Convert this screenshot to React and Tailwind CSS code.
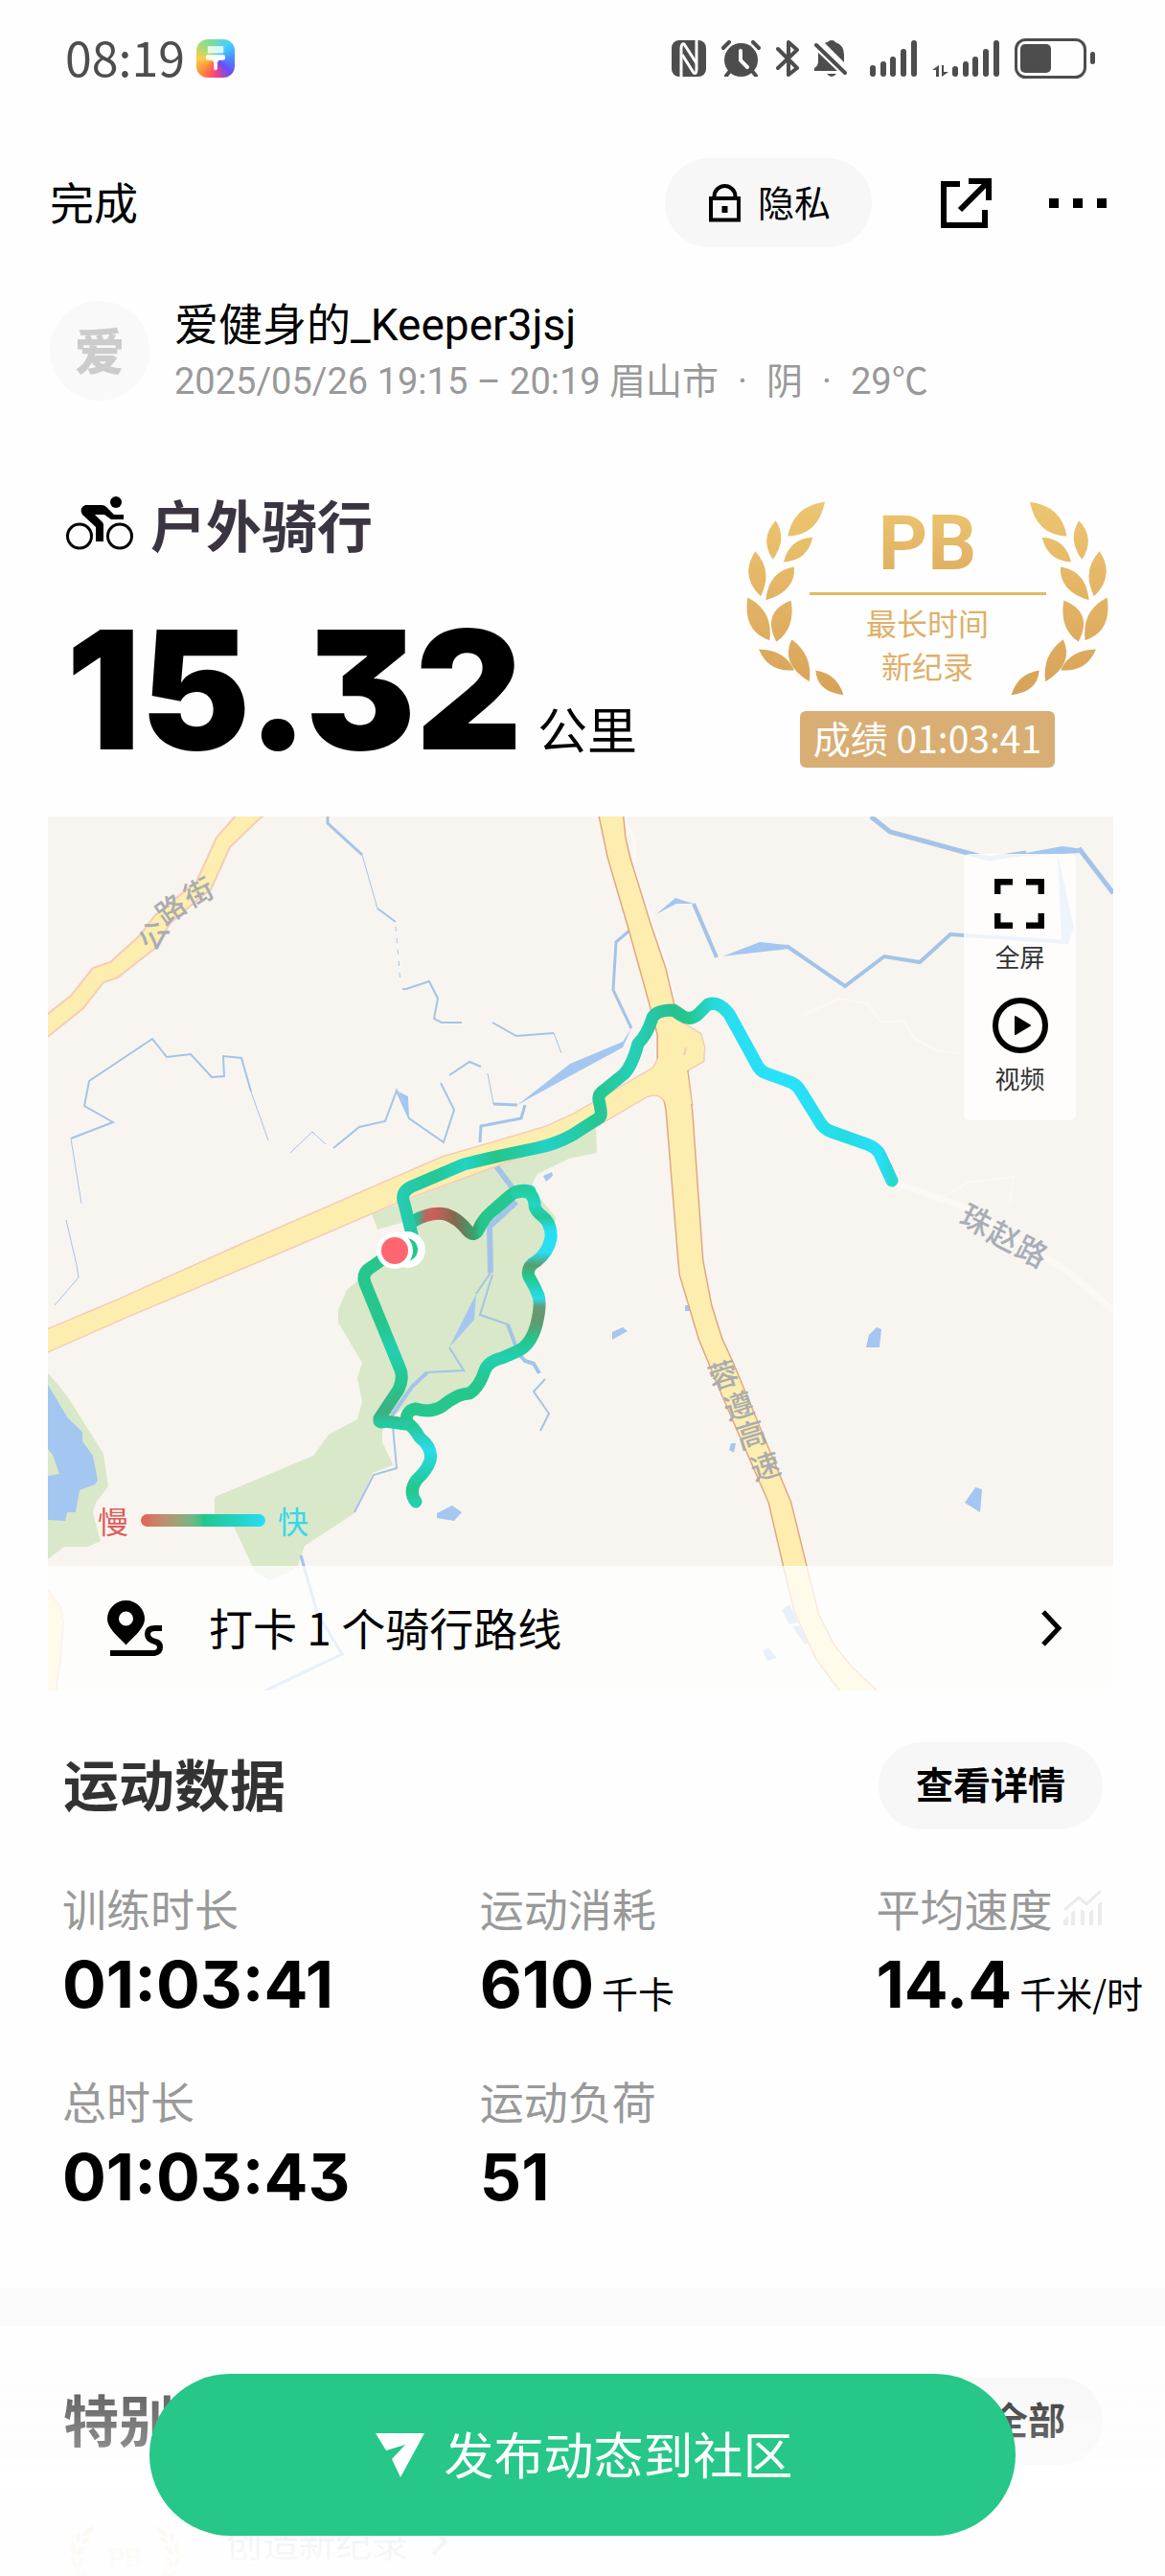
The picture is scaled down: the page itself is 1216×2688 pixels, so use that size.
import React from "react";

const INK = "#4d4d4d";

function ThemeIcon() {
  return (
    <span className="flex size-10 items-center justify-center rounded-xl bg-[conic-gradient(from_0deg,#6fd9b0,#3fd0ff,#4a8cff,#6a4cf5,#ff3f7a,#ff8a3a,#f7d04a,#9fdc7a,#6fd9b0)]">
      <svg viewBox="0 0 24 30" className="h-7 w-[22px]" fill="#fff" aria-hidden="true">
        <path d="M3 1h18v8H3z" fillOpacity=".8" />
        <path d="M1 13q0-2 2-2h18q2 0 2 2v2q0 2-3 2h-4q-1 1-2 3v7q-2 3-4 0v-7q-1-2-2-3H4q-3 0-3-2z" />
      </svg>
    </span>
  );
}

function StatusIcons() {
  return (
    <div className="flex items-center">
      <svg viewBox="0 0 36 38" className="w-9" aria-hidden="true">
        <rect width="36" height="38" rx="8" fill={INK} />
        <path d="M10 38V9q0-6 3-5l13 20" fill="none" stroke="#fff" strokeWidth="3" />
        <path d="M26 0v30q0 6-3 4L11 15" fill="none" stroke="#fff" strokeWidth="3" />
      </svg>
      <svg viewBox="0 0 41 38" className="ml-4 w-[41px]" aria-hidden="true">
        <circle cx="20.500" cy="20.500" r="17.500" fill={INK} />
        <path d="M2 8l6-6M39 8l-6-6M9 32l-4 5M32 32l4 5" stroke={INK} strokeWidth="4" strokeLinecap="round" />
        <path d="M20 11v10l7 7" fill="none" stroke="#fff" strokeWidth="4" strokeLinecap="round" />
      </svg>
      <svg viewBox="0 0 24 38" className="ml-4 w-6" aria-hidden="true">
        <path d="M2 9l20 20-9 7V2l9 8L2 29" fill="none" stroke={INK} strokeWidth="4" strokeLinecap="round" strokeLinejoin="round" />
      </svg>
      <svg viewBox="0 0 34 38" className="ml-4 w-[34px]" aria-hidden="true">
        <path d="M0 32v-3q4-2 4-7v-9l20 19zM11 3q1-1 3-1 1-2 4-2t4 2q9 3 9 13v8z" fill={INK} />
        <path d="M2 5l30 29" stroke={INK} strokeWidth="4" strokeLinecap="round" />
        <path d="M13 35h10q-5 6-10 0z" fill={INK} />
      </svg>
      <svg viewBox="0 0 49 38" className="ml-6 w-[49px]" fill={INK} aria-hidden="true">
        <rect x="0" y="26" width="6" height="12" rx="3" />
        <rect x="11" y="22" width="6" height="16" rx="3" />
        <rect x="21" y="17" width="6" height="21" rx="3" />
        <rect x="32" y="9" width="6" height="29" rx="3" />
        <rect x="43" y="0" width="6" height="38" rx="3" />
      </svg>
      <svg viewBox="0 0 70 38" className="ml-4 w-[70px]" fill={INK} aria-hidden="true">
        <path d="M7 26v12H4v-7H0zM10 26h2v7h5l-7 5z" />
        <rect x="21" y="27" width="6" height="11" rx="3" />
        <rect x="32" y="22" width="6" height="16" rx="3" />
        <rect x="42" y="17" width="6" height="21" rx="3" />
        <rect x="53" y="9" width="6" height="29" rx="3" />
        <rect x="64" y="0" width="6" height="38" rx="3" />
      </svg>
      <svg viewBox="0 0 84 42" className="ml-4 w-[84px]" aria-hidden="true">
        <rect x="1.500" y="1.500" width="72" height="39" rx="10" fill="none" stroke={INK} strokeWidth="3" />
        <rect x="6" y="6" width="32" height="30" rx="5" fill={INK} />
        <rect x="79" y="14" width="5" height="13" rx="2.500" fill={INK} />
      </svg>
    </div>
  );
}

const LEAVES = [
  "M366 100Q268 112 250 207Q345 205 366 100Z",
  "M212 158Q160 215 203 280Q250 215 212 158Z",
  "M328 211Q255 214 237 288Q310 285 328 211Z",
  "M148 254Q98 330 165 395Q205 315 148 254Z",
  "M270 303Q190 315 181 407Q275 380 270 303Z",
  "M124 399Q108 505 193 533Q205 440 124 399Z",
  "M260 408Q165 445 214 538Q275 495 260 408Z",
  "M159 561Q190 635 270 626Q240 562 159 561Z",
  "M262 530Q225 605 317 662Q330 580 262 530Z",
  "M337 627Q342 695 424 704Q405 638 337 627Z",
];

function Laurel({ className, id }) {
  const leaves = LEAVES.map((d) => <path key={d} d={d} />);
  return (
    <svg viewBox="120 98 1134 608" className={className} aria-hidden="true">
      <defs>
        <linearGradient id={id} gradientUnits="userSpaceOnUse" x1="0" y1="98" x2="0" y2="706">
          <stop offset="0" stopColor="#ecc670" />
          <stop offset=".5" stopColor="#e3b364" />
          <stop offset="1" stopColor="#d7a258" />
        </linearGradient>
      </defs>
      <g fill={`url(#${id})`}>
        {leaves}
        <g transform="translate(1374 0) scale(-1 1)">{leaves}</g>
      </g>
    </svg>
  );
}

function BikeIcon() {
  return (
    <svg viewBox="0 0 70 56" className="w-[70px]" aria-hidden="true">
      <g fill="none" stroke="#000" strokeWidth="3">
        <circle cx="14" cy="41.500" r="12.500" />
        <circle cx="56" cy="41.500" r="12.500" />
      </g>
      <circle cx="52" cy="6" r="6" />
      <path d="M20 9h17q3 0 5 2l8 8h10v5H47l-7-5H30l8 8q1 1 1 3v17h-8V32L17 19q-4-7 3-10z" />
    </svg>
  );
}

const HIGHWAY =
  "M576 0L585 43L607 118L630 201L637 228V251L643 290L646 308L659 468L660 478L680 545L703 601L753 716L768 781L780 830L802 878L827 912H864L837 886L820 865L804 833L791 781L775 716L715 571L703 545L692 510L683 463L672 308L667 265L661 215L653 196L644 158L628 111L607 43L602 21L600 0Z";
const MAIN_ROAD =
  "M637 228V251Q635 262 628 265L550 310L520 324L411 356L206 445L63 509L-4 537V560L82 522L258 448L363 403L560 330L584 316L625 292Q640 286 645 300L672 300L667 265L684 255L685 241L681 227L661 215Z";
const LANE =
  "M-4 209L24 187L47 158L65 152L95 125L112 103L155 68L176 22L199 -4H230L220 3L190 32L170 76L155 88L128 111L111 138L73 168L58 173L37 200L-4 233Z";
const PONDS = [
  "517,375 526,371 527,375 520,381",
  "406,727 422,719 432,726 424,735 406,732",
  "589,538 600,533 605,537 589,546",
  "665,510 671,510 671,516 665,516",
  "857,541 865,533 870,535 868,554 854,554",
  "713,654 718,654 716,664 711,661",
  "957,716 968,700 975,702 973,726",
  "766,828 774,822 783,841 774,843",
  "777,845 784,844 794,861 790,864",
  "746,871 752,867 761,878 751,881",
  "490,301 545,258 600,235 609,221 600,241 550,268",
  "366,287 376,292 377,315",
  "447,498 445,525 419,554",
  "704,146 743,131 771,134 774,138",
  "1021,38 1059,31 1080,34 1078,38 1021,41",
  "1054,40 1071,116 1065,133 1058,131",
  "635,102 655,85 674,91 656,91",
];
const STREAMS = [
  ["M292 0V7L328 40", 3],
  ["M328 40L344 96", 1],
  ["M344 96L363 110", 2],
  ["M370 180H374L398 172L407 190L403 211L411 215L432 215", 2],
  ["M464 215L489 229L528 226", 2],
  ["M528 226L536 247", 1],
  ["M35 404L24 336", 1],
  ["M24 336L68 319L38 302L43 276L109 232L124 251L149 248L171 272L184 271L183 250L202 252L212 287", 2],
  ["M212 287L230 338", 1],
  ["M253 351L276 329L290 342", 1],
  ["M298 346L325 324L352 318L364 286L377 315L413 340L424 306L410 278M419 270L440 256L452 261", 2],
  ["M459 268L465 300", 1],
  ["M465 300L490 301M498 301L494 315L452 323L451 340", 3],
  ["M468 365L489 393M489 402L461 428L462 476", 6],
  ["M462 476L447 498M419 554L434 578L396 580M359 625L364 680L340 687L320 726", 2],
  ["M396 580L380 595L359 625", 4],
  ["M464 478L451 520L480 530", 2],
  ["M480 530L491 560L498 568L507 571L513 581", 4],
  ["M519 587L507 600L523 623L514 641", 2],
  ["M264 771L281 831L307 874L227 912", 3],
  ["M19 421L30 468L32 481L7 510", 1],
  ["M859 0L879 16L967 40L982 44L1021 38M1076 33L1112 80", 5],
  ["M674 91L698 147M771 135L832 177L873 146L910 152L942 123L1065 131", 4],
  ["M609 221L590 181L593 131L607 119", 3],
];

function Gradient({ id, vertical, from, to, stops }) {
  return (
    <linearGradient
      id={id}
      gradientUnits="userSpaceOnUse"
      x1={vertical ? 0 : from}
      x2={vertical ? 0 : to}
      y1={vertical ? from : 0}
      y2={vertical ? to : 0}
    >
      {stops.map(([at, color]) => (
        <stop key={at} offset={(at - from) / (to - from)} stopColor={color} />
      ))}
    </linearGradient>
  );
}

function MapLabel({ chars, size, fill }) {
  return (
    <g fontSize={size} fill={fill} fontWeight="500" textAnchor="middle">
      {chars.map(([ch, x, y, r]) => (
        <text key={ch} transform={`translate(${x} ${y}) rotate(${r})`} dy={size * 0.37}>
          {ch}
        </text>
      ))}
    </g>
  );
}

function RouteMap() {
  return (
    <svg viewBox="0 0 1112 912" className="block w-full bg-[#f8f5f0]" role="img" aria-label="骑行轨迹">
      <defs>
        <Gradient id="east" from={370} to={881} stops={[[370, "#26cbb0"], [405, "#25c795"], [434, "#22d4c4"], [468, "#25c58a"], [520, "#22d2c4"], [575, "#25c792"], [610, "#25d0b8"], [651, "#28c090"], [669, "#25c78c"], [692, "#25d8d0"], [712, "#28def0"], [776, "#28e2fc"], [835, "#26dbe0"], [868, "#28e0fa"], [881, "#26d8d0"]]} />
        <Gradient id="west" vertical from={453} to={633} stops={[[453, "#25c78c"], [530, "#25c78e"], [558, "#22cfb0"], [590, "#25c78e"], [622, "#3cb080"], [633, "#25c9a0"]]} />
        <Gradient id="tail" vertical from={633} to={715} stops={[[633, "#25c78c"], [661, "#2bdcec"], [685, "#22d0b0"], [702, "#25c78c"], [715, "#22d0a8"]]} />
        <Gradient id="loop" vertical from={391} to={633} stops={[[391, "#22cf9c"], [405, "#22d4c4"], [418, "#25c795"], [432, "#26dff5"], [455, "#28def0"], [468, "#55a070"], [480, "#25c78c"], [503, "#27dcea"], [512, "#6a9a72"], [528, "#609a70"], [545, "#25c58a"], [565, "#22d0b0"], [590, "#25c78c"], [633, "#25c78c"]]} />
        <Gradient id="slow" from={386} to={503} stops={[[386, "#30b890"], [394, "#b8685c"], [402, "#cf5f5a"], [425, "#806a50"], [445, "#3aa070"], [452, "#25c58a"], [484, "#25c795"], [503, "#22d0c0"]]} />
      </defs>

      <g fill="#d9e8c9">
        <path d="M338 415L572 325L573 351L544 357L511 373L504 387L530 418L527 451L499 475L516 508L510 535L495 558L464 568L441 601L403 621L373 618L349 638V653L362 676L339 685L320 727L268 761L261 781L254 788L231 797L216 788L195 743L174 727V710L277 667L293 645L323 629L328 611L323 586L328 570L303 528V515L312 494L327 481L355 462L380 440V421L344 431Z" />
        <path d="M0 581L9 591L21 606L58 665L63 699L50 716L47 727L55 756L42 762H17L0 775Z" />
      </g>
      <path d="M355 630L378 612L372 632L352 642V653L366 678L364 684L349 653Z" fill="#f8f5f0" />
      <path d="M0 593L21 628L36 642V652L47 667L52 693L49 697L33 703L29 726H20L18 735L0 734V688L12 686L5 666L0 660Z" fill="#a3c7f0" />
      <path d="M-2 805L13 825L16 841L13 881L8 914H-2Z" fill="#fdeeb0" stroke="#f3cdb6" strokeWidth="2" />
      <g fill="none" stroke="#fbf8f6">
        <path d="M881 381L950 405L1065 475L1114 517" strokeWidth="7" />
        <path d="M600 0L612 24V60L640 140L654 190" strokeWidth="5" />
        <path d="M787 208L825 190L855 195L870 215L893 213L905 232L930 245L955 247M930 400L960 382L1008 376L1004 404" strokeWidth="2" />
      </g>
      <g fill="none" stroke="#a3c4e8">
        {STREAMS.map(([d, w]) => (
          <path key={d} d={d} strokeWidth={w} />
        ))}
        <path d="M363 115L368 173" strokeDasharray="5 7" />
      </g>
      <g fill="#a3c7f0">
        {PONDS.map((p) => (
          <polygon key={p} points={p} />
        ))}
      </g>

      <path d={LANE} fill="#fdeeb0" stroke="#f3cdb6" strokeWidth="2" />
      <path d={MAIN_ROAD} fill="none" stroke="#f3cdb6" strokeWidth="3" />
      <path d={HIGHWAY} fill="none" stroke="#e3a582" strokeWidth="3" />
      <path d={MAIN_ROAD} fill="#fdeeb0" />
      <path d={HIGHWAY} fill="#fdeeb0" />
      <path d="M666 241L664 249" stroke="#f3cdb6" strokeWidth="2" />

      <MapLabel size={30} fill="#a9acb1" chars={[["公", 110, 124, -58], ["路", 128, 97, -36], ["街", 157, 79, -27]]} />
      <MapLabel size={32} fill="#a9adb6" chars={[["珠", 969, 421, 27], ["赵", 998, 438, 27], ["路", 1027, 454, 27]]} />
      <MapLabel size={31} fill="#abacae" chars={[["蓉", 705, 583, -17], ["遵", 721, 615, -17], ["高", 734, 645, -17], ["速", 749, 678, -17]]} />

      <g fill="none" strokeWidth="13" strokeLinecap="round" strokeLinejoin="round">
        <path stroke="url(#slow)" d="M382 422Q400 412 415 415Q428 419 438 432Q445 440 450 430Q455 418 466 410L482 396Q491 388 503 391" />
        <path stroke="url(#loop)" d="M375 633Q372 620 384 618Q400 623 412 615Q428 602 440 602Q450 596 456 578Q460 568 474 565L490 558Q504 552 510 530Q515 510 512 500Q508 490 502 480Q499 470 510 464Q522 455 525 440Q526 425 516 417Q507 410 508 403Q505 388 490 392" />
        <path stroke="url(#tail)" d="M373 631Q382 637 388 648Q402 659 399 672Q396 682 385 692Q376 704 384 715" />
        <path stroke="url(#west)" d="M362 453L338 470Q327 476 331 487L367 575Q372 585 366 598L346 628Q345 634 352 631L373 634" />
        <path stroke="url(#east)" d="M881 380L869 354Q866 346 855 342L818 329Q809 326 804 316L786 287Q782 279 772 276L750 268Q743 266 739 257L711 206Q700 192 689 196L678 207Q670 213 662 208L653 202Q632 202 630 213Q625 228 616 237Q610 260 601 269L580 286Q574 290 575 296Q579 312 576 314L548 332Q530 342 510 346Q470 354 434 363L380 386Q367 392 372 404L380 436" />
      </g>
      <circle cx="375" cy="452" r="19" fill="#fff" />
      <circle cx="374" cy="452" r="12" fill="#25c78c" />
      <circle cx="362" cy="453" r="19" fill="#fff" />
      <circle cx="362" cy="453" r="14" fill="#ff6670" />
    </svg>
  );
}

function Stat({ label, value, unit, icon }) {
  return (
    <div>
      <dt className="flex items-center gap-3 text-[46px] leading-[56px] whitespace-nowrap text-[#999]">
        {label}
        {icon}
      </dt>
      <dd className="mt-4 flex items-baseline gap-2 leading-[72px] whitespace-nowrap text-black">
        <span className="font-['Inter','Noto_Sans_CJK_SC',sans-serif] text-[68px] font-bold [font-feature-settings:'cv09']">
          {value}
        </span>
        {unit && <span className="text-[38px] leading-none">{unit}</span>}
      </dd>
    </div>
  );
}

function TrendIcon() {
  return (
    <svg viewBox="0 0 40 38" className="w-10" aria-hidden="true">
      <path d="M1 22L16 9l8 7L39 2" fill="none" stroke="#ebebeb" strokeWidth="3" />
      <path d="M0 33l5-5v10H0zM8 25l4-3v16H8zM18 21l4 3v14h-4zM27 24l4-3v17h-4zM36 16l4-3v25h-4z" fill="#ebebeb" />
    </svg>
  );
}

const PILL = "rounded-full bg-[#f7f7f7]";

export default function App() {
  return (
    <div className="relative flex h-screen flex-col overflow-hidden bg-[#fefefe] font-['Noto_Sans_CJK_SC',sans-serif] text-black *:shrink-0">
      <div className="flex h-[122px] items-center justify-between pr-[73px] pl-[68px]">
        <div className="flex items-center gap-3">
          <span className="pb-1.5 text-[50px] leading-none text-[#4d4d4d]">08:19</span>
          <ThemeIcon />
        </div>
        <StatusIcons />
      </div>

      <nav className="mt-[43px] flex h-[93px] items-center pr-[61px] pl-[52px]">
        <button className="mr-auto pb-1.5 text-[46px] leading-none">完成</button>
        <button className={`flex h-full items-center gap-[18px] pr-[43px] pl-[46px] text-[38px] leading-none ${PILL}`}>
          <svg viewBox="0 0 33 40" className="w-[33px]" aria-hidden="true">
            <path d="M2 15h29v22.500H2zM5.500 15v-2a11 11 0 0 1 22 0v2" fill="none" stroke="#000" strokeWidth="4" />
            <path d="M13.500 23h6v7h-6z" />
          </svg>
          <span className="pb-1">隐私</span>
        </button>
        <button aria-label="分享" className="ml-[72px]">
          <svg viewBox="0 0 53 52" className="w-[53px]" fill="none" stroke="#000" aria-hidden="true">
            <path d="M20 6H3v43h43V33" strokeWidth="6" />
            <path d="M29 3h21v20M49 4L20 33" strokeWidth="6" />
          </svg>
        </button>
        <button aria-label="更多" className="ml-[60px] flex gap-[15px]">
          <span className="size-[10px] bg-black" />
          <span className="size-[10px] bg-black" />
          <span className="size-[10px] bg-black" />
        </button>
      </nav>

      <header className="mt-[45px] flex items-center gap-[26px] pl-[52px] font-['Roboto','Noto_Sans_CJK_SC',sans-serif]">
        <div className="flex size-[104px] items-center justify-center rounded-full bg-[#f9f9f9] pb-1 font-['Noto_Sans_CJK_SC',sans-serif] text-[52px] leading-none font-black text-[#ccc]">
          爱
        </div>
        <div className="pt-[7px] whitespace-nowrap">
          <h1 className="text-[46px] leading-[59px]">爱健身的_Keeper3jsj</h1>
          <p className="text-[38px] leading-[59px] text-[#999]">
            2025/05/26 19:15 – 20:19 眉山市<span className="mx-5">·</span>阴<span className="mx-5">·</span>29℃
          </p>
        </div>
      </header>

      <section className="mt-20 flex justify-between pr-[59px] pl-[69px]">
        <div>
          <h2 className="flex items-center gap-[18px] text-[58px] leading-[76px] font-bold text-[#3b3542]">
            <BikeIcon />
            户外骑行
          </h2>
          <p className="mt-[45px] flex items-baseline gap-4 whitespace-nowrap">
            <span className="font-['Inter','Noto_Sans_CJK_SC',sans-serif] text-[172px] leading-[180px] font-black [font-feature-settings:'cv09']">
              15.32
            </span>
            <span className="text-[52px] leading-none">公里</span>
          </p>
        </div>
        <div className="flex w-[378px] flex-col items-center pt-[15px]">
          <div className="relative h-[203px] w-full">
            <Laurel id="gold" className="absolute inset-0 size-full" />
            <div className="relative flex flex-col items-center pt-[10px]">
              <span className="bg-linear-to-b from-[#ebc46f] to-[#dfae62] bg-clip-text font-['Roboto',sans-serif] text-[80px] leading-[68px] font-bold text-transparent">
                PB
              </span>
              <hr className="mt-[17px] h-[3px] w-[247px] border-0 bg-[#e3b867]" />
              <p className="mt-[6px] text-center text-[32px] leading-[45px] text-[#dfb06a]">
                最长时间
                <br />
                新纪录
              </p>
            </div>
          </div>
          <p className="mt-4 flex h-[59px] items-center rounded-md bg-[#d9ae74] px-[14px] pb-1 text-[39px] leading-none whitespace-nowrap text-white">
            成绩 01:03:41
          </p>
        </div>
      </section>

      <section className="relative mt-[43px] mr-[54px] ml-[50px]">
        <RouteMap />
        <div className="absolute top-[39px] right-[39px] flex w-[117px] flex-col items-center gap-[27px] rounded-md bg-white/80 pt-[26px] pb-[28px] text-[26px] leading-[32px] text-[#333]">
          <button className="flex flex-col items-center gap-[13px]">
            <svg viewBox="0 0 52 52" className="w-[52px]" fill="none" stroke="#000" strokeWidth="6.500" aria-hidden="true">
              <path d="M3.200 16V3.200H19M33 3.200h15.800V16M48.800 36v12.800H33M19 48.800H3.200V36" />
            </svg>
            全屏
          </button>
          <button className="flex flex-col items-center gap-[10px]">
            <svg viewBox="0 0 58 58" className="w-[58px]" aria-hidden="true">
              <circle cx="29" cy="29" r="26" fill="none" stroke="#000" strokeWidth="6" />
              <path d="M24 20l15 9-15 9z" stroke="#000" strokeWidth="2" strokeLinejoin="round" />
            </svg>
            视频
          </button>
        </div>
        <div className="absolute bottom-[155px] left-[52px] flex items-center gap-[13px] text-[32px] leading-[45px]">
          <span className="text-[#e05c5c]">慢</span>
          <span className="h-[13px] w-[130px] rounded-full bg-linear-to-r from-[#e55f5f] via-[#25c58a] to-[#2bdcf5]" />
          <span className="text-[#35d8ea]">快</span>
        </div>
        <button className="absolute inset-x-0 bottom-0 flex h-[130px] items-center bg-white/75 pr-[53px] pl-[62px] text-left text-[46px] leading-none">
          <svg viewBox="0 0 58 58" className="mr-12 w-[58px]" aria-hidden="true">
            <path fillRule="evenodd" d="M19.500 0a19.500 19.500 0 0 1 19.500 19.500c0 9-10 17-19.500 27C10 36.500 0 28.500 0 19.500A19.500 19.500 0 0 1 19.500 0zm0 11.500a7.500 7.500 0 1 0 0 15 7.500 7.500 0 0 0 0-15z" />
            <path d="M57 29h-7q-8 0-8 6t8 8q5 1 5 6t-6 6H3" fill="none" stroke="#000" strokeWidth="6" />
          </svg>
          <span className="pb-1">打卡 1 个骑行路线</span>
          <svg viewBox="0 0 22 38" className="ml-auto w-[22px]" fill="none" stroke="#000" strokeWidth="5" aria-hidden="true">
            <path d="M2 2l16 17L2 36" />
          </svg>
        </button>
      </section>

      <section className="mt-[54px]">
        <div className="flex items-center justify-between pr-[65px] pl-[66px]">
          <h2 className="pb-2 text-[58px] leading-none font-bold text-[#333]">运动数据</h2>
          <button className={`h-[91px] px-[39px] pb-1.5 text-[39px] leading-none font-bold ${PILL}`}>查看详情</button>
        </div>
        <dl className="mt-[53px] grid grid-cols-[435fr_413fr_301fr] gap-y-[57px] pl-[65px]">
          <Stat label="训练时长" value="01:03:41" />
          <Stat label="运动消耗" value="610" unit="千卡" />
          <Stat label="平均速度" value="14.4" unit="千米/时" icon={<TrendIcon />} />
          <Stat label="总时长" value="01:03:43" />
          <Stat label="运动负荷" value="51" />
        </dl>
      </section>

      <div className="mt-[81px] h-[39px] bg-[#fafafa]" />

      <section className="mt-[54px]">
        <div className="flex items-center justify-between pr-[65px] pl-[66px]">
          <h2 className="pb-2 text-[58px] leading-none font-bold text-[#333]">特别</h2>
          <button className={`h-[91px] px-[39px] pb-1.5 text-[39px] leading-none font-bold ${PILL}`}>查看全部</button>
        </div>
        <div className="mt-[64px] flex items-start pl-[73px]">
          <div className="relative w-[115px]">
            <Laurel id="goldSmall" className="w-full" />
            <span className="absolute inset-x-0 top-5 text-center font-['Roboto',sans-serif] text-[28px] leading-none font-bold text-[#ebc46f]">
              PB
            </span>
          </div>
          <p className="ml-12 flex items-center gap-6 text-[38px] leading-[32px] text-[#777]">
            创造新纪录
            <svg viewBox="0 0 18 30" className="w-[18px]" fill="none" stroke="#777" strokeWidth="4" aria-hidden="true">
              <path d="M2 2l13 13L2 28" />
            </svg>
          </p>
        </div>
      </section>

      <div className="fixed inset-x-0 bottom-0 flex justify-center bg-[linear-gradient(to_bottom,rgba(254,254,254,0),rgba(254,254,254,.27)_28%,rgba(254,254,254,.45)_50%,rgba(254,254,254,.9)_80%,rgba(254,254,254,.98))] px-[156px] pt-[47px] pb-[42px]">
        <button className="flex h-[169px] w-full items-center justify-center gap-5 rounded-full bg-[#26c789] pl-1 text-[52px] leading-none text-white">
          <svg viewBox="0 0 51 46" className="w-[51px]" fill="#fff" aria-hidden="true">
            <path d="M0 0h51L26 46l-9-19 14-15-20 6z" />
          </svg>
          <span className="pb-1">发布动态到社区</span>
        </button>
      </div>
    </div>
  );
}
